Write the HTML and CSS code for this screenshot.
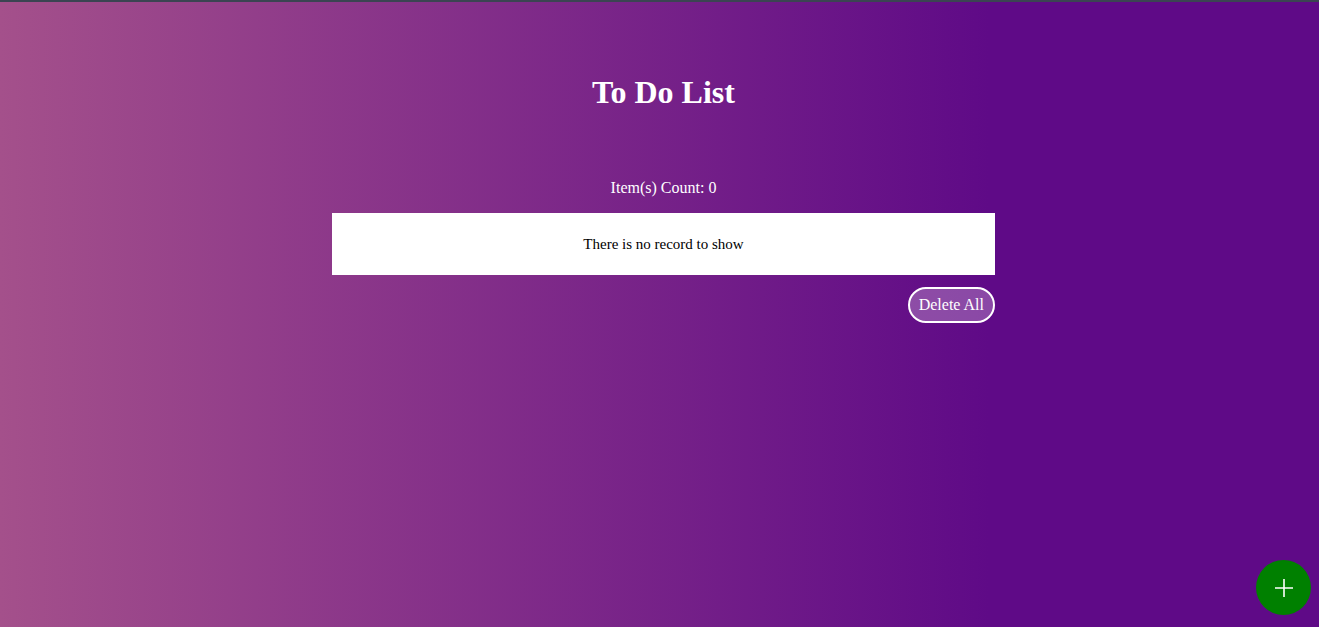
FILE: index.html
```html
<!DOCTYPE html>
<html lang="en">
<head>
<meta charset="utf-8">
<title>To Do List</title>
<link rel="stylesheet" href="styles.css">
</head>
<body>
<div class="topbar"></div>
<main class="app">
  <h1 class="title">To Do List</h1>
  <p class="count">Item(s) Count: 0</p>
  <div class="list">
    <p class="empty">There is no record to show</p>
  </div>
  <div class="actions">
    <button class="delete-all">Delete All</button>
  </div>
</main>
<button class="fab" aria-label="Add">
  <svg width="20" height="20" viewBox="0 0 20 20"><path d="M10 1v18M1 10h18" stroke="#fff" stroke-width="1.6" fill="none"/></svg>
</button>
</body>
</html>
```
FILE: styles.css
```css
html, body {
  margin: 0;
  height: 100%;
}
body {
  background: linear-gradient(to right, #a4508b 0%, #5f0a87 75%);
  font-family: "Liberation Serif", "Times New Roman", serif;
  color: #fff;
  overflow: hidden;
  padding-left: 8px;
  box-sizing: border-box;
}
.topbar {
  height: 2px;
  background: #3b4452;
  margin-left: -8px;
}
.app {
  display: flex;
  flex-direction: column;
  align-items: center;
  width: 663px;
  margin: 0 auto;
}
.title {
  font-size: 32px;
  font-weight: bold;
  margin: 72px 0 0;
  line-height: 37px;
}
.count {
  font-size: 16px;
  margin: 68px 0 0;
  line-height: 18px;
}
.list {
  align-self: stretch;
  background: #fff;
  color: #000;
  margin-top: 16px;
  height: 62px;
  display: flex;
  align-items: center;
  justify-content: center;
}
.empty {
  margin: 0;
  font-size: 15px;
  line-height: 18px;
}
.actions {
  align-self: stretch;
  display: flex;
  justify-content: flex-end;
  margin-top: 12px;
}
.delete-all {
  font-family: "Liberation Serif", "Times New Roman", serif;
  font-size: 16px;
  color: #fff;
  background: rgba(240, 220, 240, 0.3);
  border: 2px solid #fff;
  border-radius: 18px;
  height: 36px;
  padding: 0 9px;
  cursor: pointer;
}
.fab {
  position: fixed;
  right: 8px;
  bottom: 12px;
  width: 55px;
  height: 55px;
  border-radius: 50%;
  background: #008000;
  border: none;
  display: flex;
  align-items: center;
  justify-content: center;
  padding: 0;
}
.fab svg {
  display: block;
}
```
